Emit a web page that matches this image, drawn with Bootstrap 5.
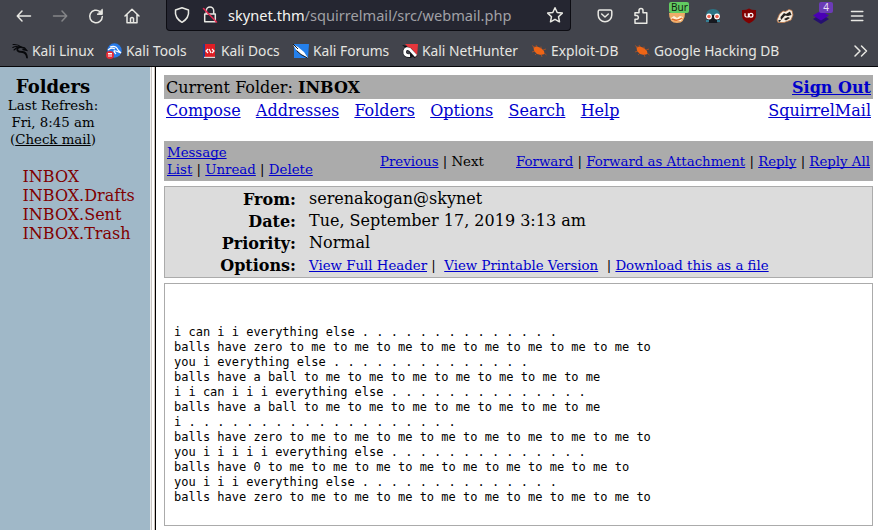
<!DOCTYPE html>
<html lang="en">
<head>
<meta charset="utf-8">
<title>SquirrelMail</title>
<link href="https://cdn.jsdelivr.net/npm/bootstrap@5.3.0/dist/css/bootstrap.min.css" rel="stylesheet">
<style>
body{width:878px;height:530px;overflow:hidden;background:#fff;color:#000;font:16px/19px "DejaVu Serif",serif}
.chrome{height:67px;background:#42444c;border-bottom:1px solid #060609;color:#e6e6e2;font-family:"Noto Sans",sans-serif}
.tools{height:31px;padding-left:6px}
.tool{width:36px;height:31px;flex:none}
.tool svg{width:18px;height:18px;overflow:visible}
.line{fill:none;stroke:#e8e8e3;stroke-width:1.5;stroke-linecap:round;stroke-linejoin:round}
.address{width:405px;height:31px;margin-left:16px;background:#252631;border:1px solid #0d0d13;border-top:0;border-radius:0 0 4px 4px;padding:0 6px}
.address svg{width:18px;height:18px;flex:none;overflow:visible}
.address .lock{margin-left:10px}
.url{font-size:14.6px;line-height:20px;color:#a0a0a5;margin-left:9px;white-space:nowrap}
.url span{color:#f4f4f0}
.extra{margin-left:16px}
.tag{position:absolute;top:2px;left:10px;width:20px;height:11px;background:#62cb62;border-radius:2px;color:#102010;font-size:10px;line-height:11px;padding-left:2px;white-space:nowrap}
.tag.purple{left:16px;width:14px;background:#6b3bb6;color:#e8dff5;padding:0;text-align:center}
.marks{height:35px;padding-left:12px;font-size:13.8px;line-height:20px;white-space:nowrap}
.marks svg{width:16px;height:16px;margin-right:4px;flex:none}
.marks .bm{height:30px;margin-top:4px;flex:none}
.frames{height:463px}
.side{width:150px;flex:none;background:#a0b8c8;font-size:13.33px;line-height:17px}
.meta{width:106px;padding-top:10px}
.meta b{font-size:18px;line-height:19px;margin-bottom:1px}
.folders{padding:19px 0 0 22.5px;font-size:16px;line-height:19px;color:#800000}
.grip{width:6px;flex:none;background:linear-gradient(90deg,#eee 0 1px,#c9c5c2 1px 2px,#fff 2px 4px,#cfc4bd 4px 5px,#000 5px)}
.page{padding:8px 5px 0 8px}
.page a{color:#0000cc;text-decoration:underline;text-decoration-skip-ink:none}
.bar{background:#ababab}
.where{height:24px;padding:0 2px}
.menu{height:42px;padding:2px 2px 0}
.menu .links{gap:15.26px}
.acts{height:40px;font-size:13.33px;line-height:17px;padding:0 3px}
.acts .one{width:213px}
.head{margin-top:5px;height:92px;background:#dcdcdc;border:1px solid #ababab;padding-top:1px}
.head .r{height:22px;line-height:22px}
.head b{width:131px;text-align:right;margin-right:13px;padding-top:1px}
.opts{font-size:13.33px;padding-top:1px;white-space:pre}
.msg{margin-top:5px;height:243px;border:1px solid #ababab;padding:41px 9px 0}
.msg pre{font:12px/15px "DejaVu Sans Mono",monospace;margin:0;overflow:hidden;color:#000}
</style>
<script src="https://cdn.jsdelivr.net/npm/bootstrap@5.3.0/dist/js/bootstrap.bundle.min.js"></script>
</head>
<body>
<header class="chrome">
<div class="tools d-flex align-items-center">
<div class="tool d-flex align-items-center justify-content-center"><svg class="line" viewBox="0 0 18 18"><path d="M15.5 9H2.5M7 4L2.3 9L7 14"/></svg></div>
<div class="tool d-flex align-items-center justify-content-center"><svg class="line" viewBox="0 0 18 18" opacity=".4"><path d="M2.5 9H15.5M11 4L15.7 9L11 14"/></svg></div>
<div class="tool d-flex align-items-center justify-content-center"><svg class="line" viewBox="0 0 18 18"><path d="M15.3 9.5A6.3 6.3 0 1 1 13 4.6"/><path d="M15.3 2.6V7.4H10.5Z" fill="#e8e8e3" stroke-width="1"/></svg></div>
<div class="tool d-flex align-items-center justify-content-center"><svg class="line" viewBox="0 0 18 18"><path d="M2 9L9 2.3L16 9M4 7.5V15.7H14V7.5M7.5 15.5V11.3Q9 9.8 10.5 11.3V15.5"/></svg></div>
<div class="address d-flex align-items-center">
<svg class="line" viewBox="0 0 18 18"><path d="M9 1.7L15.5 4Q16.5 12 9 16.3Q1.5 12 2.5 4Z"/></svg>
<svg class="line lock" viewBox="0 0 18 18"><path d="M5.3 8V4.7A3.7 3.7 0 0 1 12.7 4.7V8M3.7 8H14.3V15.7H3.7Z"/><path d="M2.5 2.5L15.5 16" stroke="#e22850" stroke-width="1.6"/></svg>
<div class="url flex-grow-1"><span>skynet.thm</span>/squirrelmail/src/webmail.php</div>
<svg class="line" viewBox="0 0 18 18"><path d="M9 1.8L11.2 6.5L16.3 7.1L12.5 10.7L13.5 15.8L9 13.3L4.5 15.8L5.5 10.7L1.7 7.1L6.8 6.5Z"/></svg>
</div>
<div class="extra d-flex">
<div class="tool d-flex align-items-center justify-content-center"><svg class="line" viewBox="0 0 18 18"><path d="M3.7 3H14.3Q15.8 3 15.8 4.5V8A6.8 6.8 0 0 1 2.2 8V4.5Q2.2 3 3.7 3ZM5.7 7L9 10L12.3 7"/></svg></div>
<div class="tool d-flex align-items-center justify-content-center"><svg class="line" viewBox="0 0 18 18"><path d="M3 16.3V12.3H5A2 2 0 0 0 5 8.5H3V5.7H7V3.5A2 2 0 0 1 11 3.5V5.7H14.8V16.3Z"/></svg></div>
<div class="tool position-relative d-flex align-items-center justify-content-center"><svg viewBox="0 0 18 18"><path d="M1 6H17Q17 16 9 16Q1 16 1 6Z" fill="#f0ad68"/><path d="M3 11L6 9L9 11L12 9L15 10L13 14H5Z" fill="#fff0d8"/><path d="M4 12Q9 15 14 11" fill="none" stroke="#e26b25" stroke-width="1.5"/></svg><span class="tag">Bur</span></div>
<div class="tool d-flex align-items-center justify-content-center"><svg viewBox="0 0 18 18"><path d="M2 9Q2 2 9 2Q16 2 16 9V10H2Z" fill="#2d7384"/><path d="M2 10Q9 6 16 10L13 16H5Z" fill="#17191f"/><circle cx="5" cy="9.5" r="2.9" fill="#fff"/><circle cx="13" cy="9.5" r="2.9" fill="#fff"/><circle cx="5" cy="9.5" r="1.8" fill="#ec624f"/><circle cx="13" cy="9.5" r="1.8" fill="#ec624f"/><path d="M2 14H5M13 14H16" stroke="#368096" stroke-width="2"/></svg></div>
<div class="tool d-flex align-items-center justify-content-center"><svg viewBox="0 0 18 18"><path d="M9 1.5Q12 3.2 16 3V8Q16 13.5 9 16.5Q2 13.5 2 8V3Q6 3.2 9 1.5Z" fill="#800000"/><path d="M5 6.3V8.8Q5 10 6.4 10H8.4V6.3" fill="none" stroke="#fff" stroke-width="1.2"/><circle cx="11" cy="8.2" r="1.9" fill="none" stroke="#fff" stroke-width="1.2"/></svg></div>
<div class="tool d-flex align-items-center justify-content-center"><svg viewBox="0 0 18 18"><path d="M1 13L3.5 7L7 4L9.5 4.5L13 2.5L16 3.5L17 8L15 13L8 15.5L2 15.5Z" fill="#f7eee1" stroke="#bb7544" stroke-width=".8"/><path d="M4.5 10L8 6L10 7L14 4.5L15.5 8L12 9L9 8.5L5 13Z" fill="#25221f"/><path d="M8 12L12 10L14 11L10 13.5ZM2.5 13H5L4 14.8H2.5Z" fill="#25221f"/></svg></div>
<div class="tool position-relative d-flex align-items-center justify-content-center"><svg viewBox="0 0 18 18"><path d="M1 12L9 7L17 12L9 17Z" fill="#25106f"/><path d="M1 8.5L9 3.5L17 8.5L9 13.5Z" fill="#4a00b5"/></svg><span class="tag purple">4</span></div>
<div class="tool d-flex align-items-center justify-content-center"><svg class="line" viewBox="0 0 18 18"><path d="M3.5 4.5H14.8M3.5 9H14.8M3.5 13.5H14.8"/></svg></div>
</div>
</div>
<div class="marks d-flex align-items-center">
<div class="bm d-flex align-items-center" style="width:94px"><svg viewBox="0 0 16 16"><g fill="none" stroke="#07080b" stroke-linecap="round"><path d="M1 1.5Q6 1 9 4M.8 4.5Q4 2.5 7.5 4.5M2 7L5 4.5" stroke-width="1.1"/><path d="M8.5 4Q4.5 4.500 5.500 7.500Q6.500 9 10.500 9Q14.500 9.500 15 14.500" stroke-width="1.8"/><path d="M8 4L12.500 5L14.500 7.300L11 6.500" stroke-width="1.400"/></g></svg>Kali Linux</div>
<div class="bm d-flex align-items-center" style="width:95px"><svg viewBox="0 0 16 16"><circle cx="8.500" cy="7.500" r="7.200" fill="#287bea"/><path d="M4 4Q10 2 12 7L15 10L10 8Q6 7 10 11M2 7Q5 4 9 6" fill="none" stroke="#fff" stroke-width="1.200"/><circle cx="4" cy="12" r="4" fill="#e62b36"/><path d="M2 10.500H6M3 10.500V14M5 10.500V14" stroke="#fff"/></svg>Kali Tools</div>
<div class="bm d-flex align-items-center" style="width:92px"><svg viewBox="0 0 16 16"><path d="M2 1H14V15H2Z" fill="#df1e25"/><path d="M2 1H4V15H2Z" fill="#263c82"/><path d="M3 13.800H14V15H3Z" fill="#d8d8d8"/><path d="M7 6L5 8L7 10M11 6L13 8L11 10M8 6L10 10" fill="none" stroke="#fff" stroke-width="1.200"/></svg>Kali Docs</div>
<div class="bm d-flex align-items-center" style="width:109px"><svg viewBox="0 0 16 16"><path d="M1 1H16L15 15H1Z" fill="#2480ec"/><path d="M0 1.500L5 4L11 9L15 15L8 11.500L3.500 7.500Z" fill="#fff"/><path d="M0 1L5 6M3.500 7.500L8 11.500L14.500 15" fill="none" stroke="#15171b"/></svg>Kali Forums</div>
<div class="bm d-flex align-items-center" style="width:129px"><svg viewBox="0 0 16 16"><path d="M3 1H16L15 14Z" fill="#e6363c"/><path d="M0 2L5 3L4 5Z" fill="#07080b"/><path d="M14 14L8 7Q4 4 2.700 8Q2 13 8 13L10 12" fill="none" stroke="#121419" stroke-width="4"/><path d="M14 13L8 6.500Q4 4 2.700 8Q2 13 8 12.500" fill="none" stroke="#fff" stroke-width="2.800"/></svg>Kali NetHunter</div>
<div class="bm d-flex align-items-center" style="width:103px"><svg viewBox="0 0 16 16"><path d="M2.500 4L6 3.500L10 5L13 8L13.500 11L10 12L6 11L3 8Z" fill="#ee6516"/><path d="M1 2.500L4 4.500M5 2L6 4M10 3.500V6M12 7L15 6M13 10L15.500 12M10 11L11 14M6 10L4 12M4 8L1 9" fill="none" stroke="#b35222" stroke-width=".8"/></svg>Exploit-DB</div>
<div class="bm d-flex align-items-center" style="width:219px"><svg viewBox="0 0 16 16"><path d="M2.500 4L6 3.500L10 5L13 8L13.500 11L10 12L6 11L3 8Z" fill="#ee6516"/><path d="M1 2.500L4 4.500M5 2L6 4M10 3.500V6M12 7L15 6M13 10L15.500 12M10 11L11 14M6 10L4 12M4 8L1 9" fill="none" stroke="#b35222" stroke-width=".8"/></svg>Google Hacking DB</div>
<div class="bm d-flex align-items-center"><svg class="line" viewBox="0 0 16 16"><path d="M2 3L7 8L2 13M8.500 3L13.500 8L8.500 13"/></svg></div>
</div>
</header>
<main class="frames d-flex">
<aside class="side">
<div class="meta d-flex flex-column align-items-center"><b>Folders</b><span>Last Refresh:</span><span>Fri, 8:45 am</span><span>(<u>Check mail</u>)</span></div>
<div class="folders"><div>INBOX</div><div>INBOX.Drafts</div><div>INBOX.Sent</div><div>INBOX.Trash</div></div>
</aside>
<div class="grip"></div>
<section class="page flex-grow-1">
<div class="bar where d-flex justify-content-between align-items-center"><div>Current Folder: <b>INBOX</b></div><a href="#"><b>Sign Out</b></a></div>
<div class="menu d-flex justify-content-between"><div class="links d-flex"><a href="#">Compose</a><a href="#">Addresses</a><a href="#">Folders</a><a href="#">Options</a><a href="#">Search</a><a href="#">Help</a></div><a href="#">SquirrelMail</a></div>
<div class="bar acts d-flex align-items-center"><div class="one"><a href="#">Message<br>List</a> | <a href="#">Unread</a> | <a href="#">Delete</a></div><div><a href="#">Previous</a> | Next</div><div class="ms-auto"><a href="#">Forward</a> | <a href="#">Forward as Attachment</a> | <a href="#">Reply</a> | <a href="#">Reply All</a></div></div>
<div class="head">
<div class="r d-flex"><b>From:</b><span>serenakogan@skynet</span></div>
<div class="r d-flex"><b>Date:</b><span>Tue, September 17, 2019 3:13 am</span></div>
<div class="r d-flex"><b>Priority:</b><span>Normal</span></div>
<div class="r d-flex"><b>Options:</b><span class="opts"><a href="#">View Full Header</a> |  <a href="#">View Printable Version</a>  | <a href="#">Download this as a file</a></span></div>
</div>
<div class="msg"><pre>i can i i everything else . . . . . . . . . . . . . .
balls have zero to me to me to me to me to me to me to me to me to
you i everything else . . . . . . . . . . . . . .
balls have a ball to me to me to me to me to me to me to me
i i can i i i everything else . . . . . . . . . . . . . .
balls have a ball to me to me to me to me to me to me to me
i . . . . . . . . . . . . . . . . . . .
balls have zero to me to me to me to me to me to me to me to me to
you i i i i i everything else . . . . . . . . . . . . . .
balls have 0 to me to me to me to me to me to me to me to me to
you i i i everything else . . . . . . . . . . . . . .
balls have zero to me to me to me to me to me to me to me to me to</pre></div>
</section>
</main>
</body>
</html>
